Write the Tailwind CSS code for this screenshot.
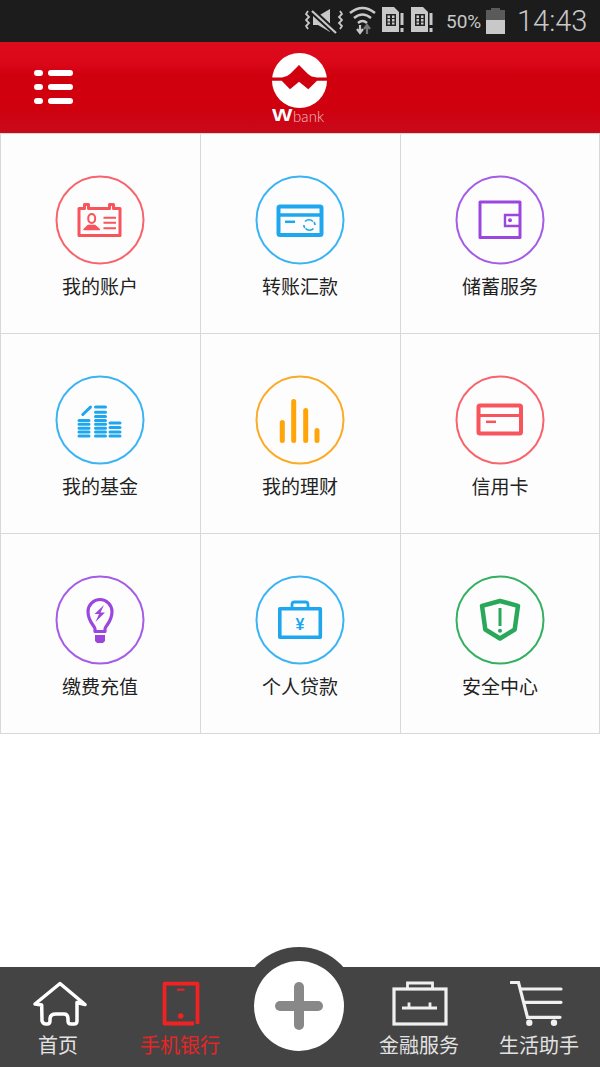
<!DOCTYPE html>
<html lang="zh-CN">
<head>
    <meta charset="UTF-8">
    <meta name="viewport" content="width=device-width, initial-scale=1.0">
    <title>Wbank 手机银行</title>
    <script src="https://cdn.jsdelivr.net/npm/@tailwindcss/browser@4"></script>
</head>
<body class="bg-white font-['Noto_Sans_CJK_SC','Liberation_Sans',sans-serif]">
<div class="relative flex h-[1067px] w-[600px] flex-col overflow-hidden">

    <!-- 状态栏 -->
    <div class="flex h-[42px] items-center bg-[#1c1c1c] pl-[305px] text-[#c8c8c8]">
        <svg class="w-[38px] h-[42px]" viewBox="0 0 38 42" fill="none" stroke="#c8c8c8">
            <path d="M8 16h5l12-7v23l-12-7h-5z" fill="#c8c8c8" stroke="none"/>
            <path d="M7 11l24 22" stroke="#1c1c1c" stroke-width="6"/>
            <path d="M7 11l24 22" stroke-width="2.200"/>
            <path d="M3 11L1 14l3 3-3 3 3 3-3 3 2 3M35 11l2 3-3 3 3 3-3 3 3 3-2 3" stroke-width="1.800"/>
        </svg>
        <svg class="ml-[6px] w-[27px] h-[42px]" viewBox="0 0 27 42" fill="none" stroke="#c8c8c8" stroke-width="2.500">
            <path d="M1 13q12.500-10 25 0M5 18q8.500-7 17 0M9 23q4.500-4 9 0"/>
            <path d="M11 25v7M8 29l3 4 3-4" stroke-width="2.200"/>
            <path d="M18 34v-8M15 29l3-4 3 4" stroke="#777" stroke-width="2.200"/>
        </svg>
        <svg class="ml-[6px] w-[22px] h-[42px]" viewBox="0 0 22 42">
            <path d="M0 7h12l5 5v20h-17z" fill="#c8c8c8"/>
            <path d="M4 14h10v12h-10z" fill="#222"/>
            <path d="M5.500 15.500h2.500v2.500h-2.500zM5.500 19h2.500v2.500h-2.500zM5.500 22.500h2.500v2h-2.500zM10 15.500h2.500v2.500h-2.500zM10 19h2.500v2.500h-2.500zM10 22.500h2.500v2h-2.500z" fill="#c8c8c8"/>
            <path d="M18.500 13h3v12h-3zM18.500 28h3v4h-3z" fill="#c8c8c8"/>
        </svg>
        <svg class="ml-[7px] w-[22px] h-[42px]" viewBox="0 0 22 42">
            <path d="M0 7h12l5 5v20h-17z" fill="#c8c8c8"/>
            <path d="M4 14h10v12h-10z" fill="#222"/>
            <path d="M5.500 15.500h2.500v2.500h-2.500zM5.500 19h2.500v2.500h-2.500zM5.500 22.500h2.500v2h-2.500zM10 15.500h2.500v2.500h-2.500zM10 19h2.500v2.500h-2.500zM10 22.500h2.500v2h-2.500z" fill="#c8c8c8"/>
            <path d="M18.500 13h3v12h-3zM18.500 28h3v4h-3z" fill="#c8c8c8"/>
        </svg>
        <span class="ml-[13px] w-[36px] font-['Roboto',sans-serif] text-[19px] leading-none">50%</span>
        <div class="ml-[4px] flex h-[26px] w-[19px] flex-col items-center">
            <div class="h-[2px] w-[9px] bg-[#5a5a5a]"></div>
            <div class="h-[10px] w-full bg-[#5a5a5a]"></div>
            <div class="h-[14px] w-full bg-[#c8c8c8]"></div>
        </div>
        <span class="ml-[12px] font-['Roboto',sans-serif] text-[29px] font-light leading-none">14:43</span>
    </div>

    <!-- 顶部红色导航 -->
    <div class="flex h-[91px] items-start bg-[linear-gradient(#de0b1e_0%,#db0819_22%,#d0000e_36%,#d0000e_72%,#c80a1c_100%)]">
        <div class="ml-[34px] mt-[28px] grid w-[39px] grid-cols-[9px_25px] gap-x-[5px] gap-y-[8px]">
            <div class="h-[6px] rounded-full bg-white"></div>
            <div class="h-[6px] rounded-full bg-white"></div>
            <div class="h-[6px] rounded-full bg-white"></div>
            <div class="h-[6px] rounded-full bg-white"></div>
            <div class="h-[6px] rounded-full bg-white"></div>
            <div class="h-[6px] rounded-full bg-white"></div>
        </div>
        <div class="ml-[198px] mt-[11px] flex w-[56px] flex-col items-center">
            <svg class="w-[55px] h-[55px]" viewBox="0 0 55 55">
                <circle cx="27.500" cy="27.500" r="27.500" fill="#fff"/>
                <path d="M0 24.500L10 24.500Q15 24 18 21L27 12L36 21Q39 24 45 24.500L55 24.500V27.700H45L36.300 36.300L27 28.700L18 36.300L9.700 27.700H0z" fill="#d0000e"/>
            </svg>
            <div class="mt-[2px] flex h-[12px] w-[56px] items-center leading-none text-white">
                <span class="ml-[1px] origin-left scale-x-[1.35] font-['Liberation_Sans',sans-serif] text-[16px] font-bold">W</span>
                <span class="ml-[6px] font-['Lato','Liberation_Sans',sans-serif] text-[15px] font-light text-white/75">bank</span>
            </div>
        </div>
    </div>

    <!-- 功能宫格 -->
    <div class="grid grid-cols-[200px_200px_200px] border-t border-[#d8d8d8]">

        <div class="flex h-[200px] flex-col items-center border-b border-l border-[#d8d8d8] bg-[#fdfdfd] pr-px pt-[41px]">
            <svg class="w-[90px] h-[90px]" viewBox="0 0 90 90" fill="none">
                <circle cx="45" cy="45" r="43.500" stroke="#f8646c" stroke-width="2"/>
                <g stroke="#f8545c" stroke-width="3" stroke-linejoin="round">
                    <path d="M24 33.500h5.500v-4h4v4h21v-4h4v4h6.500v27H24z"/>
                    <path d="M33.300 42.500a3.400 3.400 0 1 1 6.800 0v2a3.400 3.400 0 1 1-6.800 0z" stroke-width="2"/>
                    <path d="M29 54.500l4-4h7l4.500 4z" fill="#f8545c" stroke-width="1.500"/>
                    <path d="M48.500 42.700H61M48.500 47.700H61M48.500 53.300H61" stroke-width="2"/>
                </g>
            </svg>
            <span class="mt-[7px] text-[19px] leading-[28px] text-[#222]">我的账户</span>
        </div>

        <div class="flex h-[200px] flex-col items-center border-b border-l border-[#d8d8d8] bg-[#fdfdfd] pr-px pt-[41px]">
            <svg class="w-[90px] h-[90px]" viewBox="0 0 90 90" fill="none">
                <circle cx="45" cy="45" r="43.500" stroke="#3cb4f4" stroke-width="2"/>
                <rect x="23.500" y="31.500" width="43" height="28.500" rx="1.500" stroke="#1ea7ee" stroke-width="4"/>
                <path d="M23 40h44" stroke="#1ea7ee" stroke-width="3.500"/>
                <path d="M30 46.800h10" stroke="#1ea7ee" stroke-width="2.500"/>
                <path d="M50 46.500a5.500 5.500 0 0 1 8 0M58.500 53.500a5.500 5.500 0 0 1-8 0M48.800 50a5.500 5.500 0 0 0 1 3M60 50a5.500 5.500 0 0 0-1-3" stroke="#1ea7ee" stroke-width="1.700"/>
            </svg>
            <span class="mt-[7px] text-[19px] leading-[28px] text-[#222]">转账汇款</span>
        </div>

        <div class="flex h-[200px] flex-col items-center border-x border-b border-[#d8d8d8] bg-[#fdfdfd] pt-[41px]">
            <svg class="w-[90px] h-[90px]" viewBox="0 0 90 90" fill="none">
                <circle cx="45" cy="45" r="43.500" stroke="#a55ce6" stroke-width="2"/>
                <path d="M25 27h40v35.500H25z" stroke="#9c46e0" stroke-width="3" stroke-linejoin="round"/>
                <path d="M65 40H50v11h15" stroke="#9c46e0" stroke-width="2.400"/>
                <circle cx="55" cy="45.300" r="2" fill="#9c46e0"/>
            </svg>
            <span class="mt-[7px] text-[19px] leading-[28px] text-[#222]">储蓄服务</span>
        </div>

        <div class="flex h-[200px] flex-col items-center border-b border-l border-[#d8d8d8] bg-[#fdfdfd] pr-px pt-[41px]">
            <svg class="w-[90px] h-[90px]" viewBox="0 0 90 90" fill="none">
                <circle cx="45" cy="45" r="43.500" stroke="#3cb4f4" stroke-width="2"/>
                <g stroke="#1ea7ee" stroke-width="3" stroke-linecap="round">
                    <path d="M27.800 39.500l7.700-7.400"/>
                    <path d="M24 45.400h10M24 49.300h10M24 53.200h10M24 57.100h10M24 61h10"/>
                    <path d="M40.500 32h10M40.500 37.300h10M40.500 41.500h10M40.500 45.400h10M40.500 49.300h10M40.500 53.200h10M40.500 57.100h10M40.500 61h10"/>
                    <path d="M55 48h10M55 52.500h10M55 57h10M55 61h10"/>
                </g>
            </svg>
            <span class="mt-[7px] text-[19px] leading-[28px] text-[#222]">我的基金</span>
        </div>

        <div class="flex h-[200px] flex-col items-center border-b border-l border-[#d8d8d8] bg-[#fdfdfd] pr-px pt-[41px]">
            <svg class="w-[90px] h-[90px]" viewBox="0 0 90 90" fill="none">
                <circle cx="45" cy="45" r="43.500" stroke="#fbab28" stroke-width="2"/>
                <g stroke="#ffa50a" stroke-width="5" stroke-linecap="round">
                    <path d="M27.300 47.500v18M38.700 26.500v39M50.700 35.500v30M62 55.500v10"/>
                </g>
            </svg>
            <span class="mt-[7px] text-[19px] leading-[28px] text-[#222]">我的理财</span>
        </div>

        <div class="flex h-[200px] flex-col items-center border-x border-b border-[#d8d8d8] bg-[#fdfdfd] pt-[41px]">
            <svg class="w-[90px] h-[90px]" viewBox="0 0 90 90" fill="none">
                <circle cx="45" cy="45" r="43.500" stroke="#f8646c" stroke-width="2"/>
                <rect x="23.500" y="30.500" width="42.500" height="28" rx="1.500" stroke="#f8545c" stroke-width="4"/>
                <path d="M23 40.500h43.500" stroke="#f8545c" stroke-width="3"/>
                <path d="M31 46.800h10" stroke="#f8545c" stroke-width="2.500"/>
            </svg>
            <span class="mt-[7px] text-[19px] leading-[28px] text-[#222]">信用卡</span>
        </div>

        <div class="flex h-[200px] flex-col items-center border-b border-l border-[#d8d8d8] bg-[#fdfdfd] pr-px pt-[41px]">
            <svg class="w-[90px] h-[90px]" viewBox="0 0 90 90" fill="none">
                <circle cx="45" cy="45" r="43.500" stroke="#a55ce6" stroke-width="2"/>
                <path d="M40 56.500v-2.500c0-3-7-7-7-17.500a12 12 0 0 1 24 0c0 10.500-7 14.500-7 17.500v2.500z" stroke="#9c46e0" stroke-width="3.200" stroke-linejoin="round"/>
                <path d="M49 30l-9.500 9h4.500l-3.500 8 9.500-9.500h-4.500z" fill="#9c46e0"/>
                <path d="M40 60h10v6l-2 2h-6l-2-2z" fill="#9c46e0"/>
            </svg>
            <span class="mt-[7px] text-[19px] leading-[28px] text-[#222]">缴费充值</span>
        </div>

        <div class="flex h-[200px] flex-col items-center border-b border-l border-[#d8d8d8] bg-[#fdfdfd] pr-px pt-[41px]">
            <svg class="w-[90px] h-[90px]" viewBox="0 0 90 90" fill="none">
                <circle cx="45" cy="45" r="43.500" stroke="#3cb4f4" stroke-width="2"/>
                <rect x="24.800" y="33.800" width="40.500" height="28.500" stroke="#1ea7ee" stroke-width="3.600" stroke-linejoin="round"/>
                <path d="M37 33v-3.500q0-2.500 2.500-2.500h11q2.500 0 2.500 2.500V33" stroke="#1ea7ee" stroke-width="2.800"/>
                <text x="45" y="54.500" text-anchor="middle" fill="#1ea7ee" font-family="Liberation Sans, sans-serif" font-size="16" font-weight="bold">¥</text>
            </svg>
            <span class="mt-[7px] text-[19px] leading-[28px] text-[#222]">个人贷款</span>
        </div>

        <div class="flex h-[200px] flex-col items-center border-x border-b border-[#d8d8d8] bg-[#fdfdfd] pt-[41px]">
            <svg class="w-[90px] h-[90px]" viewBox="0 0 90 90" fill="none">
                <circle cx="45" cy="45" r="43.500" stroke="#34b060" stroke-width="2"/>
                <path d="M45 26l18 4.800-3.300 23.700-14.700 9-14.700-9-3.300-23.700z" stroke="#2aa85a" stroke-width="4.500" stroke-linejoin="round"/>
                <path d="M45 33v18" stroke="#2aa85a" stroke-width="3"/>
                <circle cx="45" cy="55.800" r="2" fill="#2aa85a"/>
            </svg>
            <span class="mt-[7px] text-[19px] leading-[28px] text-[#222]">安全中心</span>
        </div>
    </div>

    <div class="flex-1"></div>

    <!-- 底部导航 -->
    <div class="relative grid h-[100px] grid-cols-5 bg-[#444444] text-[20px] leading-[28px] text-[#e2e2e2]">
        <div class="flex flex-col items-center pt-[11px]">
            <svg class="w-[60px] h-[50px]" viewBox="0 0 60 50" fill="none" stroke="#fff" stroke-width="3.500" stroke-linejoin="round" stroke-linecap="round">
                <path d="M5 26L30 5.500 55 26.500 47 24.500V43q0 3-3 3h-3q-3 0-3-3v-2q0-5-4-5h-8q-6 0-6 5v2q0 3-3 3h-1q-3 0-4-3L11.700 27z"/>
            </svg>
            <span class="-ml-[4px] mt-[3px]">首页</span>
        </div>
        <div class="flex flex-col items-center pt-[11px] text-[#e82424]">
            <svg class="w-[60px] h-[50px]" viewBox="0 0 60 50" fill="none" stroke="#f02222" stroke-width="3.800" stroke-linejoin="round">
                <path d="M44 45.500H14.500V5.700H47.500V46"/>
                <path d="M27 11.700h7.500" stroke-width="2"/>
                <circle cx="30.700" cy="38" r="2.800" fill="#f02222" stroke="none"/>
            </svg>
            <span class="mt-[3px]">手机银行</span>
        </div>
        <div></div>
        <div class="flex flex-col items-center pt-[11px]">
            <svg class="w-[60px] h-[50px]" viewBox="0 0 60 50" fill="none" stroke="#f0f0f0" stroke-width="3.200">
                <rect x="4" y="11" width="52" height="35"/>
                <path d="M17.500 10.500V5h25v5.500" stroke-width="2.800"/>
                <path d="M12 30h35M19 24.500V30M40 24.500V30" stroke-width="2.800"/>
            </svg>
            <span class="-ml-[2px] mt-[3px]">金融服务</span>
        </div>
        <div class="flex flex-col items-center pt-[11px]">
            <svg class="w-[60px] h-[50px]" viewBox="0 0 60 50" fill="none" stroke="#f0f0f0" stroke-width="3.200" stroke-linecap="round">
                <path d="M1 4.500h7.500L17.500 39.300H50M11.500 11H51M14.500 24.300H51"/>
                <circle cx="19.300" cy="44.700" r="3.200" fill="#f0f0f0" stroke="none"/>
                <circle cx="44" cy="44.700" r="3.200" fill="#f0f0f0" stroke="none"/>
            </svg>
            <span class="-ml-[2px] mt-[3px]">生活助手</span>
        </div>

        <!-- 中间加号按钮 -->
        <div class="absolute left-[240px] top-[-20px] flex h-[118px] w-[118px] items-center justify-center rounded-full bg-[#444444]">
            <div class="relative flex h-[90px] w-[90px] items-center justify-center rounded-full bg-white">
                <div class="h-[10px] w-[48px] rounded-full bg-[#888888]"></div>
                <div class="absolute h-[48px] w-[10px] rounded-full bg-[#888888]"></div>
            </div>
        </div>
    </div>
</div>
</body>
</html>
